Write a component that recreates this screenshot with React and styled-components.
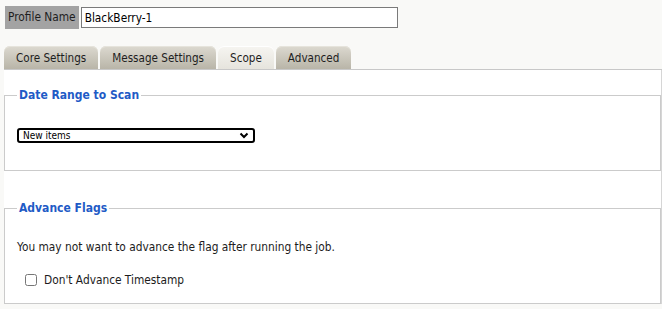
import styled, { createGlobalStyle } from "styled-components";

const GlobalStyle = createGlobalStyle`
  body {
    margin: 0;
    background: #f9f9f7;
    font-family: "DejaVu Sans Condensed", "DejaVu Sans", sans-serif;
    font-size: 11.8px;
    color: #1c1c1c;
  }`

const Page = styled.div`
  width: 658px;
  padding: 6px 0 0 4px;`

const ProfileRow = styled.div`
  display: flex;
  align-items: flex-start;
  gap: 2px;
  margin-left: 1px;`

const ProfileLabel = styled.span`
  display: block;
  height: 23px;
  line-height: 23px;
  padding: 0 3px 0 3px;
  background: #a3a3a3;
  color: #1e1e1e;`

const ProfileInput = styled.input`
  box-sizing: border-box;
  width: 317px;
  height: 21px;
  margin: 1px 0 0;
  padding: 0 3px;
  border: 1px solid #7a7a7a;
  font: inherit;
  color: #000;
  background: #fff;
  outline: none;`

const TabBar = styled.div`
  display: flex;
  gap: 2px;
  margin-top: 17px;
  border-bottom: 1px solid #c8c8c8;`

const Tab = styled.div`
  height: 23px;
  line-height: 24px;
  padding: 0 12px;
  border-radius: 6px 6px 0 0;
  font-size: 11.6px;
  color: #1e1e1e;
  background: ${(p) =>
    p.active
      ? "linear-gradient(#f6f5f1, #e6e4dd)"
      : "linear-gradient(#dcd9d0, #b9b5a8)"};
  box-shadow: inset 0 1px 0 ${(p) => (p.active ? "#ffffff" : "#e6e4dc")};`

const Panel = styled.div`
  background: #fff;
  border-right: 1px solid #d6d6d6;
  padding-top: 17px;`

const Group = styled.fieldset`
  margin: ${(p) => p.gap || 0}px 0 0;
  padding: 0 12px ${(p) => p.bottom}px;
  border: 1px solid #cbcbcb;
  min-width: 0;`

const Legend = styled.legend`
  padding: 0 2px;
  line-height: 16px;
  font-size: 12px;
  font-weight: bold;
  color: #1f5bc6;`

const SelectWrap = styled.div`
  position: relative;
  width: 238px;
  margin-top: 25px;`

const Select = styled.select`
  box-sizing: border-box;
  width: 238px;
  height: 15px;
  padding: 0 0 0 4px;
  border: 2px solid #000;
  border-radius: 3px;
  appearance: none;
  background: #fff;
  font-family: "DejaVu Sans Condensed", "DejaVu Sans", sans-serif;
  font-size: 10px;
  line-height: 11px;
  color: #000;
  outline: none;`

const Chevron = styled.svg`
  position: absolute;
  right: 6px;
  top: 4px;
  pointer-events: none;`

const Note = styled.p`
  margin: 23px 0 0;
  line-height: 16px;
  color: #1c1c1c;`

const CheckRow = styled.label`
  display: flex;
  align-items: center;
  gap: 7px;
  height: 16px;
  margin: 17px 0 0 8px;`

const Check = styled.input`
  width: 12px;
  height: 12px;
  margin: 0;`

export default function App() {
  return (
    <>
      <GlobalStyle />
      <Page>
        <ProfileRow>
          <ProfileLabel>Profile Name</ProfileLabel>
          <ProfileInput defaultValue="BlackBerry-1" />
        </ProfileRow>

        <TabBar>
          <Tab>Core Settings</Tab>
          <Tab>Message Settings</Tab>
          <Tab active>Scope</Tab>
          <Tab>Advanced</Tab>
        </TabBar>

        <Panel>
          <Group bottom={27}>
            <Legend>Date Range to Scan</Legend>
            <SelectWrap>
              <Select defaultValue="new">
                <option value="new">New items</option>
                <option value="all">All items</option>
              </Select>
              <Chevron width="10" height="7" viewBox="0 0 10 7">
                <path d="M1.5 1.5 L5 5 L8.5 1.5" fill="none" stroke="#000" strokeWidth="2" />
              </Chevron>
            </SelectWrap>
          </Group>

          <Group gap={29} bottom={15}>
            <Legend>Advance Flags</Legend>
            <Note>You may not want to advance the flag after running the job.</Note>
            <CheckRow>
              <Check type="checkbox" />
              Don't Advance Timestamp
            </CheckRow>
          </Group>
        </Panel>
      </Page>
    </>
  );
}
